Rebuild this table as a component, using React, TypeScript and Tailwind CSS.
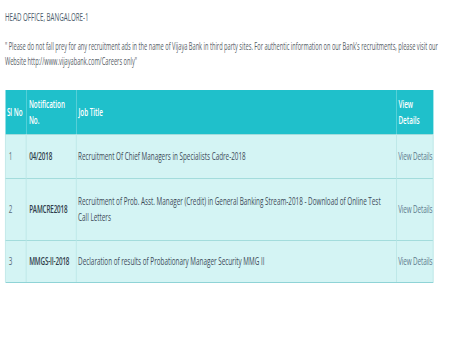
const rows = [
  { no: "1", code: "04/2018", title: <>Recruitment Of Chief Managers in Specialists Cadre-2018</>, h: "h-[44px]" },
  {
    no: "2",
    code: "PAMCRE2018",
    title: (
      <>
        Recruitment of Prob. Asst. Manager (Credit) in General Banking Stream-2018 - Download of Online Test
        <br />
        Call Letters
      </>
    ),
    h: "h-[62px]",
  },
  { no: "3", code: "MMGS-II-2018", title: <>Declaration of results of Probationary Manager Security MMG II</>, h: "h-[42px]" },
];

export default function App() {
  return (
    <div className="w-[451px] h-[338px] overflow-hidden bg-white">
      <div className="w-[820px] origin-top-left scale-x-[0.55] font-['Open_Sans',sans-serif] text-[11.5px] leading-4">
        <div className="px-[9px] pt-[9px] text-[#4b5b6b] text-[11.3px] leading-4">HEAD OFFICE, BANGALORE-1</div>

        <p className="px-[9px] mt-[14px] text-[#555d66] text-[10.3px] leading-[15px] whitespace-nowrap">
          " Please do not fall prey for any recruitment ads in the name of Vijaya Bank in third party sites. For authentic information on our Bank's recruitments, please visit our
          <br />
          Website http://www.vijayabank.com/Careers only"
        </p>

        <table className="ml-[9px] mt-[21px] w-[778px] border-collapse table-fixed">
          <colgroup>
            <col className="w-[38px]" />
            <col className="w-[91px]" />
            <col className="w-[582px]" />
            <col className="w-[67px]" />
          </colgroup>
          <thead>
            <tr className="bg-[#1fc0cb] text-white h-[44px]">
              <th className="text-left font-semibold px-[3px] align-middle whitespace-nowrap">Sl No</th>
              <th className="text-left font-semibold px-[5px] align-middle">
                Notification
                <br />
                No.
              </th>
              <th className="text-left font-semibold px-[4px] align-middle">Job Title</th>
              <th className="text-left font-semibold px-[4px] align-middle">
                View
                <br />
                Details
              </th>
            </tr>
          </thead>
          <tbody>
            {rows.map((r) => (
              <tr key={r.no} className={`bg-[#d4f4f4] ${r.h} border-t border-[#a3dcdc]`}>
                <td className="px-[6px] align-middle text-[#5a6a78] border-l border-[#a3dcdc]">{r.no}</td>
                <td className="px-[5px] align-middle font-semibold text-[#2f3d4a] border-l border-[#a3dcdc] whitespace-nowrap tracking-[-0.3px]">{r.code}</td>
                <td className="px-[3px] align-middle text-[#3d4b59] border-l border-[#a3dcdc]">{r.title}</td>
                <td className="px-[3px] align-middle text-[#5d7a8c] border-l border-r border-[#a3dcdc] whitespace-nowrap tracking-[-0.2px]">View Details</td>
              </tr>
            ))}
            <tr>
              <td colSpan={4} className="h-px p-0 bg-[#8fd3d6]" />
            </tr>
          </tbody>
        </table>
      </div>
    </div>
  );
}
